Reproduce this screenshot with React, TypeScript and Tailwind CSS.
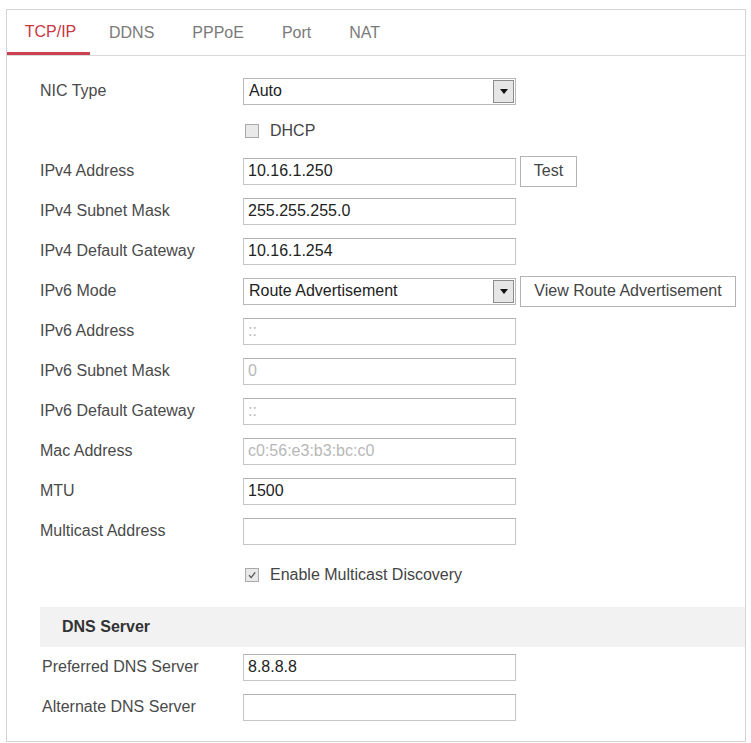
import React from 'react';

type Row =
    | { kind: 'select'; label: string; value: string; button?: string; buttonW?: string }
    | { kind: 'input'; label: string; value: string; disabled?: boolean; button?: string; buttonW?: string }
    | { kind: 'check'; text: string; checked: boolean };

const tabs = ['TCP/IP', 'DDNS', 'PPPoE', 'Port', 'NAT'];

const rows: Row[] = [
    { kind: 'select', label: 'NIC Type', value: 'Auto' },
    { kind: 'check', text: 'DHCP', checked: false },
    { kind: 'input', label: 'IPv4 Address', value: '10.16.1.250', button: 'Test', buttonW: 'w-[57px]' },
    { kind: 'input', label: 'IPv4 Subnet Mask', value: '255.255.255.0' },
    { kind: 'input', label: 'IPv4 Default Gateway', value: '10.16.1.254' },
    {
        kind: 'select',
        label: 'IPv6 Mode',
        value: 'Route Advertisement',
        button: 'View Route Advertisement',
        buttonW: 'w-[216px]',
    },
    { kind: 'input', label: 'IPv6 Address', value: '::', disabled: true },
    { kind: 'input', label: 'IPv6 Subnet Mask', value: '0', disabled: true },
    { kind: 'input', label: 'IPv6 Default Gateway', value: '::', disabled: true },
    { kind: 'input', label: 'Mac Address', value: 'c0:56:e3:b3:bc:c0', disabled: true },
    { kind: 'input', label: 'MTU', value: '1500' },
    { kind: 'input', label: 'Multicast Address', value: '' },
];

function Checkbox({ checked }: { checked: boolean }) {
    return (
        <span className="w-[14px] h-[14px] border border-[#a9a9a9] bg-[#e9e9e9] flex items-center justify-center">
            {checked && (
                <svg width="10" height="10" viewBox="0 0 10 10">
                    <path d="M2 5.2 L4.2 7.6 L8.2 2.4" fill="none" stroke="#555" strokeWidth="1.3" />
                </svg>
            )}
        </span>
    );
}

function SideButton({ text, w }: { text: string; w?: string }) {
    return (
        <button
            className={`ml-[4px] h-[31px] ${w ?? ''} border border-[#b4b4b4] bg-white text-[16px] text-[#444] leading-none flex items-center justify-center`}
        >
            {text}
        </button>
    );
}

function Field({ row }: { row: Row }) {
    if (row.kind === 'check') {
        return (
            <div className="h-[40px] flex items-center pl-[203px]">
                <span className="ml-[2px]">
                    <Checkbox checked={row.checked} />
                </span>
                <span className="ml-[11px] text-[16px] text-[#444]">{row.text}</span>
            </div>
        );
    }

    return (
        <div className="h-[40px] flex items-center">
            <div className="w-[203px] text-[16px] text-[#4a4a4a] whitespace-nowrap">{row.label}</div>
            {row.kind === 'select' ? (
                <div className="w-[273px] h-[27px] border border-[#b9b9b9] bg-white flex items-center">
                    <span className="flex-1 pl-[5px] text-[16px] text-[#222]">{row.value}</span>
                    <span className="w-[21px] h-[23px] mr-[1px] border border-[#8c8c8c] bg-[#e6e6e6] flex items-center justify-center">
                        <svg width="8" height="5" viewBox="0 0 8 5">
                            <path d="M0 0 H8 L4 5 Z" fill="#111" />
                        </svg>
                    </span>
                </div>
            ) : (
                <div className="w-[273px] h-[27px] border border-[#c6c6c6] border-t-[#b2b2b2] bg-white flex items-center">
                    <span className={`pl-[4px] text-[16px] ${row.disabled ? 'text-[#b8b8b8]' : 'text-[#222]'}`}>
                        {row.value}
                    </span>
                </div>
            )}
            {row.button && <SideButton text={row.button} w={row.buttonW} />}
        </div>
    );
}

export default function App() {
    return (
        <div className="w-[751px] h-[743px] bg-white pt-[9px] pl-[6px] pr-[5px] font-['Liberation_Sans',Arial,sans-serif]">
            <div className="h-[733px] border border-[#d4d4d4] flex flex-col">
                {/* Tabs */}
                <div className="h-[46px] border-b border-[#d9d9d9] flex">
                    {tabs.map((t, i) =>
                        i === 0 ? (
                            <div
                                key={t}
                                className="w-[83px] h-full flex items-center justify-center border-b-[3px] border-[#c9424d] text-[16px] text-[#c9363f] pt-[2px] pl-[4px]"
                            >
                                {t}
                            </div>
                        ) : (
                            <div key={t} className="h-full flex items-center px-[19px] text-[16px] text-[#7a7a7a]">
                                {t}
                            </div>
                        )
                    )}
                </div>

                {/* Main form */}
                <div className="flex flex-col pl-[33px] pt-[15px]">
                    {rows.map((r, i) => (
                        <Field key={i} row={r} />
                    ))}
                    <div className="h-[48px] flex items-center pl-[205px]">
                        <Checkbox checked />
                        <span className="ml-[11px] text-[16px] text-[#444]">Enable Multicast Discovery</span>
                    </div>
                </div>

                {/* DNS section */}
                <div className="mt-[8px] ml-[33px] h-[40px] bg-[#f2f2f2] flex items-center pl-[22px]">
                    <span className="text-[16px] font-bold text-[#333]">DNS Server</span>
                </div>
                <div className="flex flex-col pl-[35px]">
                    <div className="h-[40px] flex items-center">
                        <div className="w-[201px] text-[16px] text-[#4a4a4a]">Preferred DNS Server</div>
                        <div className="w-[273px] h-[27px] border border-[#c6c6c6] border-t-[#b2b2b2] flex items-center">
                            <span className="pl-[4px] text-[16px] text-[#222]">8.8.8.8</span>
                        </div>
                    </div>
                    <div className="h-[40px] flex items-center">
                        <div className="w-[201px] text-[16px] text-[#4a4a4a]">Alternate DNS Server</div>
                        <div className="w-[273px] h-[27px] border border-[#c6c6c6] border-t-[#b2b2b2]" />
                    </div>
                </div>
            </div>
        </div>
    );
}
